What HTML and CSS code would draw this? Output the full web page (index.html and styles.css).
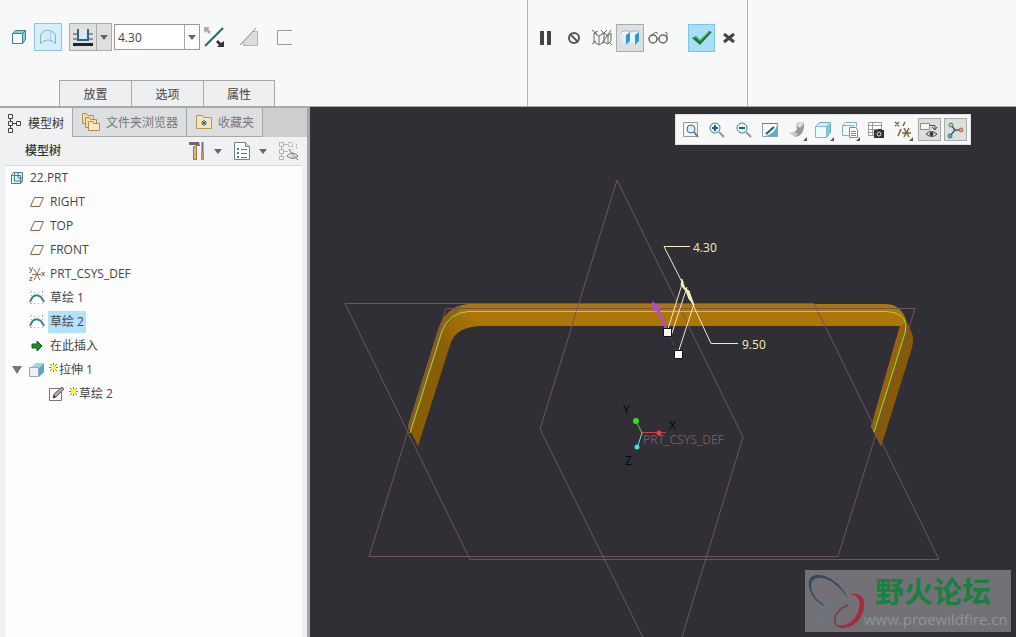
FILE: index.html
```html
<!DOCTYPE html>
<html lang="zh-CN">
<head>
  <meta charset="UTF-8">
  <meta name="viewport" content="width=device-width, initial-scale=1.0">
  <title>22.PRT</title>
  <link rel="stylesheet" href="styles.css">
</head>
<body>
  <header class="ribbon">
    <section class="dashboard">
      <div class="options">
        <button class="tool" aria-label="实体">
          <svg width="16" height="16"><path d="M1.500 4.500l3-3h10v9l-3 4h-10z" fill="#8ccbd8" stroke="#3b8196"/><path d="M1.500 4.500h10v10h-10z" fill="#fff" stroke="#3b8196"/><path d="M11.500 4.500l3-3" stroke="#3b8196"/></svg>
        </button>
        <button class="tool selected" aria-label="曲面">
          <svg width="18" height="18"><path d="M1.500 15.500V7Q5 1 11 2.500q4 1 5.500 5v8Q13 12 9 12t-7.500 3.500z" fill="#d5edf7" stroke="#86afc1"/><path d="M11.500 3v9" stroke="#a9cddd"/></svg>
        </button>
        <div class="split">
          <button class="tool pressed" aria-label="深度">
            <svg width="22" height="20"><path d="M1 7h5M1 12h5M16 7h5M16 12h5" stroke="#8f9396" stroke-width="2"/><path d="M6 2v11h10V2" fill="#dceaf0" stroke="#2c6a82" stroke-width="2"/><path d="M1 17.500h20" stroke="#222" stroke-width="3"/></svg>
          </button>
          <button class="drop pressed" aria-label="深度选项"><i class="caret"></i></button>
        </div>
        <div class="combo">
          <input type="text" value="4.30" aria-label="深度值">
          <button class="drop" aria-label="深度列表"><i class="caret"></i></button>
        </div>
        <button class="tool" aria-label="反向">
          <svg width="22" height="22"><path d="M2 20L20 2" stroke="#23627b" stroke-width="2"/><path d="M1 1h6L5 3l3 3-2 2-3-3-2 2z" fill="#aaa"/><path d="M21 21h-7l2-2-3-3 2-2 3 3 3-2z" fill="#333"/></svg>
        </button>
        <button class="tool" aria-label="移除材料">
          <svg width="20" height="20"><path d="M4.500 4.500h14v14h-14z" fill="#dcdcdc" stroke="#b5b5b5"/><path d="M1 18L17 1H1z" fill="#f7f8f8"/><path d="M1 18L17 1" stroke="#888"/></svg>
        </button>
        <button class="tool" aria-label="加厚草绘">
          <svg width="18" height="18"><path d="M17 2.500H2.500v14H17" fill="none" stroke="#999"/></svg>
        </button>
      </div>
      <nav class="panels">
        <button>放置</button>
        <button>选项</button>
        <button>属性</button>
      </nav>
    </section>
    <section class="confirm">
      <button class="tool" aria-label="暂停">
        <svg width="14" height="16"><path d="M1 1h4v14H1zM8 1h4v14H8z" fill="#444"/></svg>
      </button>
      <button class="tool" aria-label="无预览">
        <svg width="14" height="14"><circle cx="7" cy="7" r="5" fill="none" stroke="#555" stroke-width="2"/><path d="M3 3l8 8" stroke="#555" stroke-width="2"/></svg>
      </button>
      <button class="tool" aria-label="分离预览">
        <svg width="20" height="18"><path d="M2 4l5 3v9l-5-3zM7 7l5-3v9l-5 3M12 4l4 3v8l-4-2M16 7l3-3v8l-3 3M2 4l4-2M12 4l3-3M0 1l5 4M9 1l3 4M19 1l-9 13M0 15l4-3M17 13l3 3" fill="none" stroke="#666"/></svg>
      </button>
      <button class="tool pressed" aria-label="连接预览">
        <svg width="20" height="16"><path d="M1 3l2-2h6l2 1v9l-4 4-6-4z" fill="#f4fbfe"/><path d="M1 3l5 2v9l-5-3z" fill="#d7f1fa"/><path d="M6 5l4-3v9l-4 4z" fill="#3497c9"/><path d="M11 2l2-1h5l1 2v9l-4 3-4-4z" fill="#e1f5fb"/><path d="M15 5l4-3v9l-4 4z" fill="#3497c9"/><path d="M1 3l2-2h6l2 1 2-1h5l1 1" fill="none" stroke="#91bac6"/></svg>
      </button>
      <button class="tool" aria-label="眼镜">
        <svg width="20" height="16"><g fill="none" stroke="#666"><circle cx="5" cy="9" r="4" stroke-width="1.500"/><circle cx="15" cy="9" r="4" stroke-width="1.500"/><path d="M9 9q1-1 2 0M2 6l6-4 2 2M19 9V3l-2-1"/></g></svg>
      </button>
      <button class="tool ok" aria-label="确定">
        <svg width="20" height="16"><path d="M0 8l4-2 4 4L17 1l3 1L8 15z" fill="#217a36"/><path d="M2 8l2-1 4 4L17 2" fill="none" stroke="#55b763"/></svg>
      </button>
      <button class="tool" aria-label="取消">
        <svg width="12" height="12"><path d="M1 2l10 8M11 2L1 10" stroke="#444" stroke-width="3"/></svg>
      </button>
    </section>
  </header>

  <main class="workspace">
    <aside class="navigator">
      <nav class="tabs">
        <button class="active">
          <svg width="14" height="20"><g fill="none" stroke="#444"><path d="M1.500 1.500h4v4h-4zM1.500 8.500h4v4h-4zM1.500 15.500h4v4h-4zM9.500 8.500h4v4h-4zM3.500 6v2M3.500 13v2M6 10.500h3"/></g></svg>
          模型树
        </button>
        <button>
          <svg width="20" height="20"><g fill="#f3dca9" stroke="#b78c4f"><path d="M1.500 1.500h4l1 2h6v8h-11z"/><path d="M4.500 5.500h4l1 2h6v8h-11z"/><path d="M7.500 9.500h4l1 2h6v7h-11z" fill="#fae8c2"/></g></svg>
          文件夹浏览器
        </button>
        <button>
          <svg width="18" height="18"><path d="M1.500 2.500h6l1 2h8v11h-15z" fill="#f7e4b8" stroke="#bd9657"/><path d="M9 7v6M6 10h6M7 8l4 4M11 8l-4 4" stroke="#246b87"/></svg>
          收藏夹
        </button>
      </nav>
      <div class="tree-head">
        <h2>模型树</h2>
        <button aria-label="设置">
          <svg width="18" height="20"><path d="M1 1h10l1 4H9L7 4H1z" fill="#666b70"/><path d="M5.500 5.500h3v13h-3z" fill="#dcb77c" stroke="#a0763a"/><path d="M14.500 1v9" stroke="#776b91" stroke-width="2"/><path d="M13 10h3v9h-3z" fill="#bd8d48"/></svg>
          <i class="caret"></i>
        </button>
        <button aria-label="显示">
          <svg width="18" height="20"><path d="M1.500 1.500h11l4 4v13h-15z" fill="#fff" stroke="#76808a"/><path d="M12.500 1.500v4h4" fill="#ddd" stroke="#76808a"/><path d="M4 7h2v2H4zM4 11h2v2H4zM4 15h2v2H4z" fill="#51788b"/><path d="M8 8.500h6M8 12.500h6M8 16.500h6" stroke="#51788b"/></svg>
          <i class="caret"></i>
        </button>
        <button aria-label="隐藏">
          <svg width="21" height="20"><g fill="none" stroke="#b5b5b5"><path d="M1.500 1.500h4v4h-4zM1.500 8.500h4v4h-4zM1.500 15.500h4v3h-4zM3.500 6v2M3.500 13v2M6 3.500h4M6 10.500h4" /><path d="M10.500 1.500h4v4h-4zM10.500 8.500h4M18.500 3v6" stroke-dasharray="2 1"/><path d="M9 15q5-6 11 0-5 5-11 0M11 9l9 10" stroke="#777"/><circle cx="15" cy="15" r="1.500"/></g></svg>
        </button>
      </div>
      <ul class="tree">
        <li class="root">
          <svg width="14" height="14"><path d="M1.500 3.500l2-2h9v9l-2 2h-9z" fill="#e0f0f4" stroke="#4c7f91"/><path d="M1.500 4.500h9v8M4.500 2v8h8M8 1v6h5" fill="none" stroke="#4c7f91"/></svg>
          <span>22.PRT</span>
        </li>
        <li>
          <svg width="16" height="16"><path d="M1.500 12.500l4-9h9l-4 9z" fill="none" stroke="#806446"/></svg>
          <span>RIGHT</span>
        </li>
        <li>
          <svg width="16" height="16"><path d="M1.500 12.500l4-9h9l-4 9z" fill="none" stroke="#806446"/></svg>
          <span>TOP</span>
        </li>
        <li>
          <svg width="16" height="16"><path d="M1.500 12.500l4-9h9l-4 9z" fill="none" stroke="#806446"/></svg>
          <span>FRONT</span>
        </li>
        <li>
          <svg class="csys-icon" width="16" height="16" viewBox="0 0 16 16"><path d="M3 8.500h9M5 3l6 11M11 2L5 14" stroke="#967147"/><text x="0" y="5">y</text><text x="0" y="15">z</text><text x="12" y="10">x</text></svg>
          <span>PRT_CSYS_DEF</span>
        </li>
        <li>
          <svg width="16" height="16"><path d="M1 2.500h14M1 13.500h14M2.500 1v14M13.500 1v14" stroke="#9baab8" stroke-dasharray="1 3"/><path d="M1 12C4 3 11 3 15 12" fill="none" stroke="#3b7f98" stroke-width="2"/></svg>
          <span>草绘 1</span>
        </li>
        <li>
          <svg width="16" height="16"><path d="M1 2.500h14M1 13.500h14M2.500 1v14M13.500 1v14" stroke="#9baab8" stroke-dasharray="1 3"/><path d="M1 12C4 3 11 3 15 12" fill="none" stroke="#3b7f98" stroke-width="2"/></svg>
          <span class="picked">草绘 2</span>
        </li>
        <li>
          <svg width="16" height="16"><path d="M3 6h5V3l5 5-5 5v-3H3z" fill="#159327" stroke="#145c1c"/></svg>
          <span>在此插入</span>
        </li>
        <li class="open">
          <i class="twisty"></i>
          <svg width="16" height="16"><path d="M1 6l6-5h8l-5 5z" fill="#9ed6e8"/><path d="M10 6l5-5v9l-5 5z" fill="#5aa6c4"/><path d="M.500 5.500h9v9h-9z" fill="#edf1f3" stroke="#9ba8b0"/></svg>
          <svg class="spark" width="9" height="9"><path d="M4.500 0v9M0 4.500h9M1 1l7 7M8 1L1 8" stroke="#8b841c"/><circle cx="4.500" cy="4.500" r="2.500" fill="#fff22d"/></svg>
          <span>拉伸 1</span>
        </li>
        <li class="child">
          <svg width="16" height="16"><path d="M.500 2.500h12v12H.500z" fill="#fff" stroke="#777"/><path d="M4 12l1-4 8-7 2 2-8 8z" fill="#c79a9a" stroke="#666"/><path d="M4 12l3-1-2-2z" fill="#333"/></svg>
          <svg class="spark" width="9" height="9"><path d="M4.500 0v9M0 4.500h9M1 1l7 7M8 1L1 8" stroke="#8b841c"/><circle cx="4.500" cy="4.500" r="2.500" fill="#fff22d"/></svg>
          <span>草绘 2</span>
        </li>
      </ul>
    </aside>

    <section class="viewport">
      <svg class="scene" viewBox="310 107 706 530" preserveAspectRatio="xMinYMin slice">
        <defs>
          <linearGradient id="bend" gradientUnits="userSpaceOnUse" x1="436" y1="345" x2="474" y2="314">
            <stop offset="0" stop-color="#8a5e08"/>
            <stop offset="1" stop-color="#ad7609"/>
          </linearGradient>
        </defs>
        <!-- extruded surface -->
        <path d="M408 426L437 333Q444 306 468 304H885Q899 304 905 317L913 337 912 347 881 446 871 427 900 326H480Q457 327 451 342L418 446z" fill="url(#bend)"/>
        <path d="M408 426L437 333Q444 309 462 306L444 330 411 433z" fill="#91601b"/>
        <path d="M905 317L913 337 912 347 881 446 874 432 906 330z" fill="#865909"/>
        <path d="M900 326L905 323 906 330 874 432 871 427z" fill="#95640c"/>
        <!-- datum planes -->
        <g class="datum">
          <path d="M617 180L743 437 667 686 540 429z"/>
          <path d="M345 303.500H814L939 559.500H470z"/>
          <path d="M446 308.500H915L838 556.500H369z"/>
        </g>
        <path class="curve" d="M410 433L442 331Q449 313 468 311.500H886Q904 312 906 325L905 333 874 432"/>
        <!-- depth handle and dimensions -->
        <path d="M656 306L666 328" stroke="#b747cb" stroke-width="3"/>
        <path d="M652 301l9 7-8 4z" fill="#b747cb"/>
        <path d="M667 332L678 354" stroke="#7d3a85" stroke-dasharray="3 3"/>
        <g class="dim">
          <path d="M690 246.500H664L684 286L695 309L711 343.500H738"/>
          <path d="M667 332L683 281M671 336L687 287M678 353L694 304"/>
          <path class="arrow" d="M682 279l3 11-4-5zM685 288l4 3 5 14-5-6z"/>
          <text x="693" y="252">4.30</text>
          <text x="742" y="349">9.50</text>
        </g>
        <path class="grip" d="M663.500 328.500h8v8h-8zM674.500 350.500h8v8h-8z"/>
        <!-- coordinate system -->
        <text class="csys" x="643" y="444">PRT_CSYS_DEF</text>
        <path d="M642 432.500H666" stroke="#cf3b42"/>
        <path d="M642 433L636 421" stroke="#54df45"/>
        <path d="M642 433L637 448" stroke="#64dfe4"/>
        <circle cx="659" cy="433" r="2.500" fill="#dd4347"/>
        <circle cx="636" cy="421" r="3" fill="#35df29"/>
        <circle cx="637" cy="447" r="2.500" fill="#45dce2"/>
        <g class="axes">
          <text x="623" y="414">Y</text>
          <text x="669" y="430">X</text>
          <text x="625" y="465">Z</text>
        </g>
      </svg>

      <div class="view-tools">
        <button aria-label="重新调整">
          <svg width="18" height="18"><path d="M1.500 1.500h14v14h-14z" fill="#f4f4f4" stroke="#999"/><circle cx="9" cy="8" r="4" fill="#dbf1fa" stroke="#34738a"/><path d="M12 11l4 5" stroke="#777" stroke-width="2"/></svg>
        </button>
        <button aria-label="放大">
          <svg width="18" height="18"><path d="M11 11l5 5" stroke="#9d9389" stroke-width="2"/><circle cx="7" cy="7" r="5" fill="#eaf8fd" stroke="#3c7d99"/><path d="M4 7h6M7 4v6" stroke="#1d6381" stroke-width="2"/></svg>
        </button>
        <button aria-label="缩小">
          <svg width="18" height="18"><path d="M11 11l5 5" stroke="#9d9389" stroke-width="2"/><circle cx="7" cy="7" r="5" fill="#eaf8fd" stroke="#3c7d99"/><path d="M4 7h6" stroke="#1d6381" stroke-width="2"/></svg>
        </button>
        <button aria-label="重画">
          <svg width="18" height="18"><path d="M1.500 2.500h15v13h-15z" fill="#f6fbfd" stroke="#8ca4af"/><path d="M16 4v11H4q10-2 12-11z" fill="#58b0cb"/><path d="M1 2.500h16" stroke="#777"/><path d="M5 13l8-7" stroke="#205b75" stroke-width="2"/></svg>
        </button>
        <button class="more" aria-label="渲染">
          <svg width="18" height="18"><path d="M2 12q5 0 7-4l-1-5 4-2 4 1v5q-2 8-8 9z" fill="#999"/><path d="M8 4l4-3 4 1-4 5z" fill="#ddd"/><path d="M1 12l5-1 4 2-3 3z" fill="#ccc"/></svg>
        </button>
        <button class="more" aria-label="显示样式">
          <svg width="18" height="18"><path d="M1.500 5.500l4-4h11v10l-4 5" fill="#7fcbdc" stroke="#68afbf"/><path d="M2 5l4-3h10l-4 3z" fill="#d4eff5"/><path d="M1.500 5.500h11v11h-11z" fill="#f2fafc" stroke="#7fb9c8"/></svg>
        </button>
        <button class="more" aria-label="已保存方向">
          <svg width="18" height="18"><path d="M1.500 4.500l3-3h11v5M1.500 4.500h11v10h-11z" fill="#f1fafc" stroke="#77b4c4"/><path d="M8.500 6.500h6l2 2v8h-8z" fill="#fff" stroke="#888"/><path d="M10 10.500h5M10 12.500h5M10 14.500h5" stroke="#888"/></svg>
        </button>
        <button aria-label="视图管理器">
          <svg width="18" height="18"><path d="M1.500 1.500h13v13h-13zM1.500 4.500h13M1.500 8.500h13M1.500 11.500h13M5.500 1.500v13" fill="#fff" stroke="#999"/><path d="M7 9h3l1-1h3l1 1h2v8H7z" fill="#333"/><circle cx="12" cy="13" r="2" fill="#333" stroke="#ddd"/></svg>
        </button>
        <button class="more" aria-label="基准显示">
          <svg width="18" height="18"><path d="M1 1l4 4M5 1L1 5M11 1L9 5M7 8l-3 7M10 7l5 9M15 7l-5 9M8 12h9" stroke="#806039" stroke-width="1.500"/></svg>
        </button>
        <button class="on" aria-label="注释显示">
          <svg width="18" height="18"><path d="M.500 2.500h9v6h-9z" fill="#fbf6ea" stroke="#a38967"/><path d="M10 4.500h5v4M12 6l3 3 2-3M6 13q5-5 11 0-5 5-11 0z" fill="none" stroke="#444"/><circle cx="11.500" cy="13" r="2" fill="#333"/></svg>
        </button>
        <button class="on" aria-label="旋转中心">
          <svg width="18" height="18"><path d="M8 9L4 4M8 9h7M8 9l-5 6" stroke="#365f6b" stroke-width="1.500"/><circle cx="4" cy="4" r="2" fill="#a9dc9b" stroke="#587e51"/><circle cx="14" cy="9" r="2" fill="#f18d83" stroke="#c6645e"/><circle cx="3" cy="15" r="2" fill="#65b4c4" stroke="#2b7488"/></svg>
        </button>
      </div>

      <div class="watermark">
        <svg width="58" height="56" fill="none">
          <path d="M42 27C36 10 15-2 5 5-2 14 8 32 22 35 4 26 3 13 7 8 17 1 33 12 42 27z" fill="#34495f"/>
          <path d="M29 33q-10 0-11 7 2 7 13 3M28 32q-9-1-15 7-6 9 1 12 6 1 10-2" stroke="#69777f" stroke-width="2"/>
          <path d="M44 22q16-2 14 14-4 18-20 20-5 1-8-3 15 3 22-13 6-15-8-18z" fill="#a52b3b"/>
          <path d="M42 33q-10 4-13 12-1 5 2 9" stroke="#75474f" stroke-width="2"/>
        </svg>
        <div>
          <strong>野火论坛</strong>
          <span>www.proewildfire.cn</span>
        </div>
      </div>
    </section>
  </main>
</body>
</html>
```
FILE: styles.css
```css
:root {
  --ribbon: #f7f8f8;
  --panel: #eff1f2;
  --line: #a6a8aa;
  --text: #444;
  --scene: #302f35;
  --font-ui: "Open Sans", "Noto Sans CJK SC", sans-serif;
}

*, *::before, *::after {
  box-sizing: border-box;
}

body {
  margin: 0;
  height: 100vh;
  display: flex;
  flex-direction: column;
  overflow: hidden;
  font-family: var(--font-ui);
  font-size: 12px;
  color: var(--text);
  background: var(--ribbon);
}

button {
  display: flex;
  align-items: center;
  justify-content: center;
  margin: 0;
  padding: 0;
  border: 0;
  background: none;
  font: inherit;
  color: inherit;
}

svg {
  display: block;
  flex: none;
}

.caret {
  border: 4px solid transparent;
  border-top: 5px solid #666;
  border-bottom: 0;
}

/* Ribbon */
.ribbon {
  display: grid;
  grid-template-columns: 52% 220px 1fr;
  height: 107px;
  flex: none;
  border-bottom: 1px solid var(--line);
}

.dashboard,
.confirm {
  border-right: 1px solid #b4b6b8;
}

.dashboard {
  display: flex;
  flex-direction: column;
  justify-content: space-between;
  padding-top: 23px;
}

.options {
  display: flex;
  align-items: center;
  gap: 7px;
  padding-left: 5px;
}

.options > .tool:first-child { margin-right: -6px; }

.tool {
  width: 28px;
  height: 28px;
}

.tool.selected {
  background: #d3effb;
  border: 1px solid #8fc3da;
}

.pressed {
  background: #dedfe0;
  border: 1px solid #a9abad;
}

.split,
.combo {
  display: flex;
  height: 28px;
}

.combo {
  width: 86px;
  height: 26px;
  margin-left: -5px;
  margin-right: -7px;
  border: 1px solid #999;
  background: #fff;
}

.combo input {
  flex: 1;
  min-width: 0;
  padding: 0 3px;
  border: 0;
  outline: 0;
  font: inherit;
  color: inherit;
  background: none;
}

.drop { width: 15px; }
.split .drop { border-left: 0; }
.combo .drop { border-left: 1px solid #aaa; }

.panels {
  display: flex;
  padding-left: 59px;
}

.panels button {
  width: 72px;
  height: 26px;
  background: #eeeff0;
  border: 1px solid var(--line);
  border-right: 0;
  border-bottom: 0;
}

.panels button:last-child {
  border-right: 1px solid var(--line);
}

.confirm {
  display: flex;
  align-items: flex-start;
  padding: 24px 4px 0 4px;
}

.confirm .ok {
  margin-left: 16px;
  background: #a8def8;
  border: 1px solid #7cc3e5;
}

/* Navigator */
.workspace {
  display: flex;
  flex: 1;
  min-height: 0;
}

.navigator {
  display: flex;
  flex-direction: column;
  width: 310px;
  flex: none;
  background: var(--panel);
  border-top: 1px solid var(--line);
  border-right: 3px solid #a3a5a7;
}

.tabs {
  display: flex;
  height: 29px;
  background: #cccecf;
}

.tabs button {
  gap: 5px;
  padding: 0 8px;
  background: #dcdedf;
  border-right: 1px solid var(--line);
  border-bottom: 1px solid var(--line);
  color: #777;
}

.tabs .active {
  gap: 7px;
  padding: 0 8px 0 7px;
  background: var(--panel);
  border-bottom: 0;
  color: #333;
}

.tree-head {
  display: flex;
  align-items: center;
  gap: 11px;
  height: 28px;
  padding: 0 8px 0 25px;
}

.tree-head h2 {
  flex: 1;
  margin: 0;
  font-size: 12px;
  font-weight: 500;
  line-height: 18px;
  color: #333;
}

.tree-head button { gap: 8px; }

.tree {
  flex: 1;
  margin: 0 5px;
  padding: 0;
  list-style: none;
  background: #fdfdfd;
  border-top: 1px solid #d5d7d8;
}

.tree li {
  display: flex;
  align-items: center;
  gap: 3px;
  height: 24px;
  padding-left: 24px;
}

.tree span {
  padding: 2px;
  line-height: 18px;
}

.tree .root { padding-left: 5px; gap: 4px; }
.tree .open { padding-left: 7px; }
.tree .child { padding-left: 44px; }
.tree .picked { background: #b3e1fa; }
.tree .spark { margin: 0 -4px 6px 1px; }

.open .twisty {
  margin-right: 4px;
  border: 5px solid transparent;
  border-top: 8px solid #777;
  border-bottom: 0;
}

.csys-icon {
  overflow: visible;
  font-size: 8px;
  fill: #333;
}

/* Graphics area */
.viewport {
  position: relative;
  flex: 1;
  min-width: 0;
  background: var(--scene);
}

.scene {
  width: 100%;
  height: 100%;
}

.datum {
  fill: none;
  stroke: #74525a;
}

.curve {
  fill: none;
  stroke: #91e51c;
}

.dim {
  fill: none;
  stroke: #f2edbd;
}

.dim text {
  fill: #f2edbd;
  stroke: none;
  font-size: 12px;
}

.dim .arrow { fill: #f2edbd; }

.grip {
  fill: #fff;
  stroke: #111;
}

.csys {
  fill: #74575e;
  font-size: 12px;
}

.axes {
  fill: #08080a;
  font-size: 12px;
}

.view-tools {
  position: absolute;
  top: 7px;
  right: 45px;
  display: flex;
  align-items: center;
  justify-content: space-between;
  width: 296px;
  height: 31px;
  padding: 0 3px;
  background: #f8f8f8;
  border: 1px solid #ddd;
}

.view-tools button {
  position: relative;
  width: 23px;
  height: 23px;
}

.view-tools .on {
  background: #dddedf;
  border: 1px solid #aaa;
}

.more::after {
  content: "";
  position: absolute;
  right: 1px;
  bottom: 0;
  border: 2px solid #555;
  border-top-color: transparent;
  border-left-color: transparent;
}

.watermark {
  position: absolute;
  right: 5px;
  bottom: 5px;
  display: flex;
  width: 206px;
  height: 62px;
  padding: 2px 0 0 1px;
  background: #737175;
}

.watermark div {
  display: flex;
  flex-direction: column;
}

.watermark strong {
  padding-left: 11px;
  font-family: "Noto Sans CJK SC", sans-serif;
  font-size: 29px;
  line-height: 36px;
  color: #188040;
}

.watermark span {
  font-size: 15px;
  line-height: 22px;
  color: #8d9599;
}
```
